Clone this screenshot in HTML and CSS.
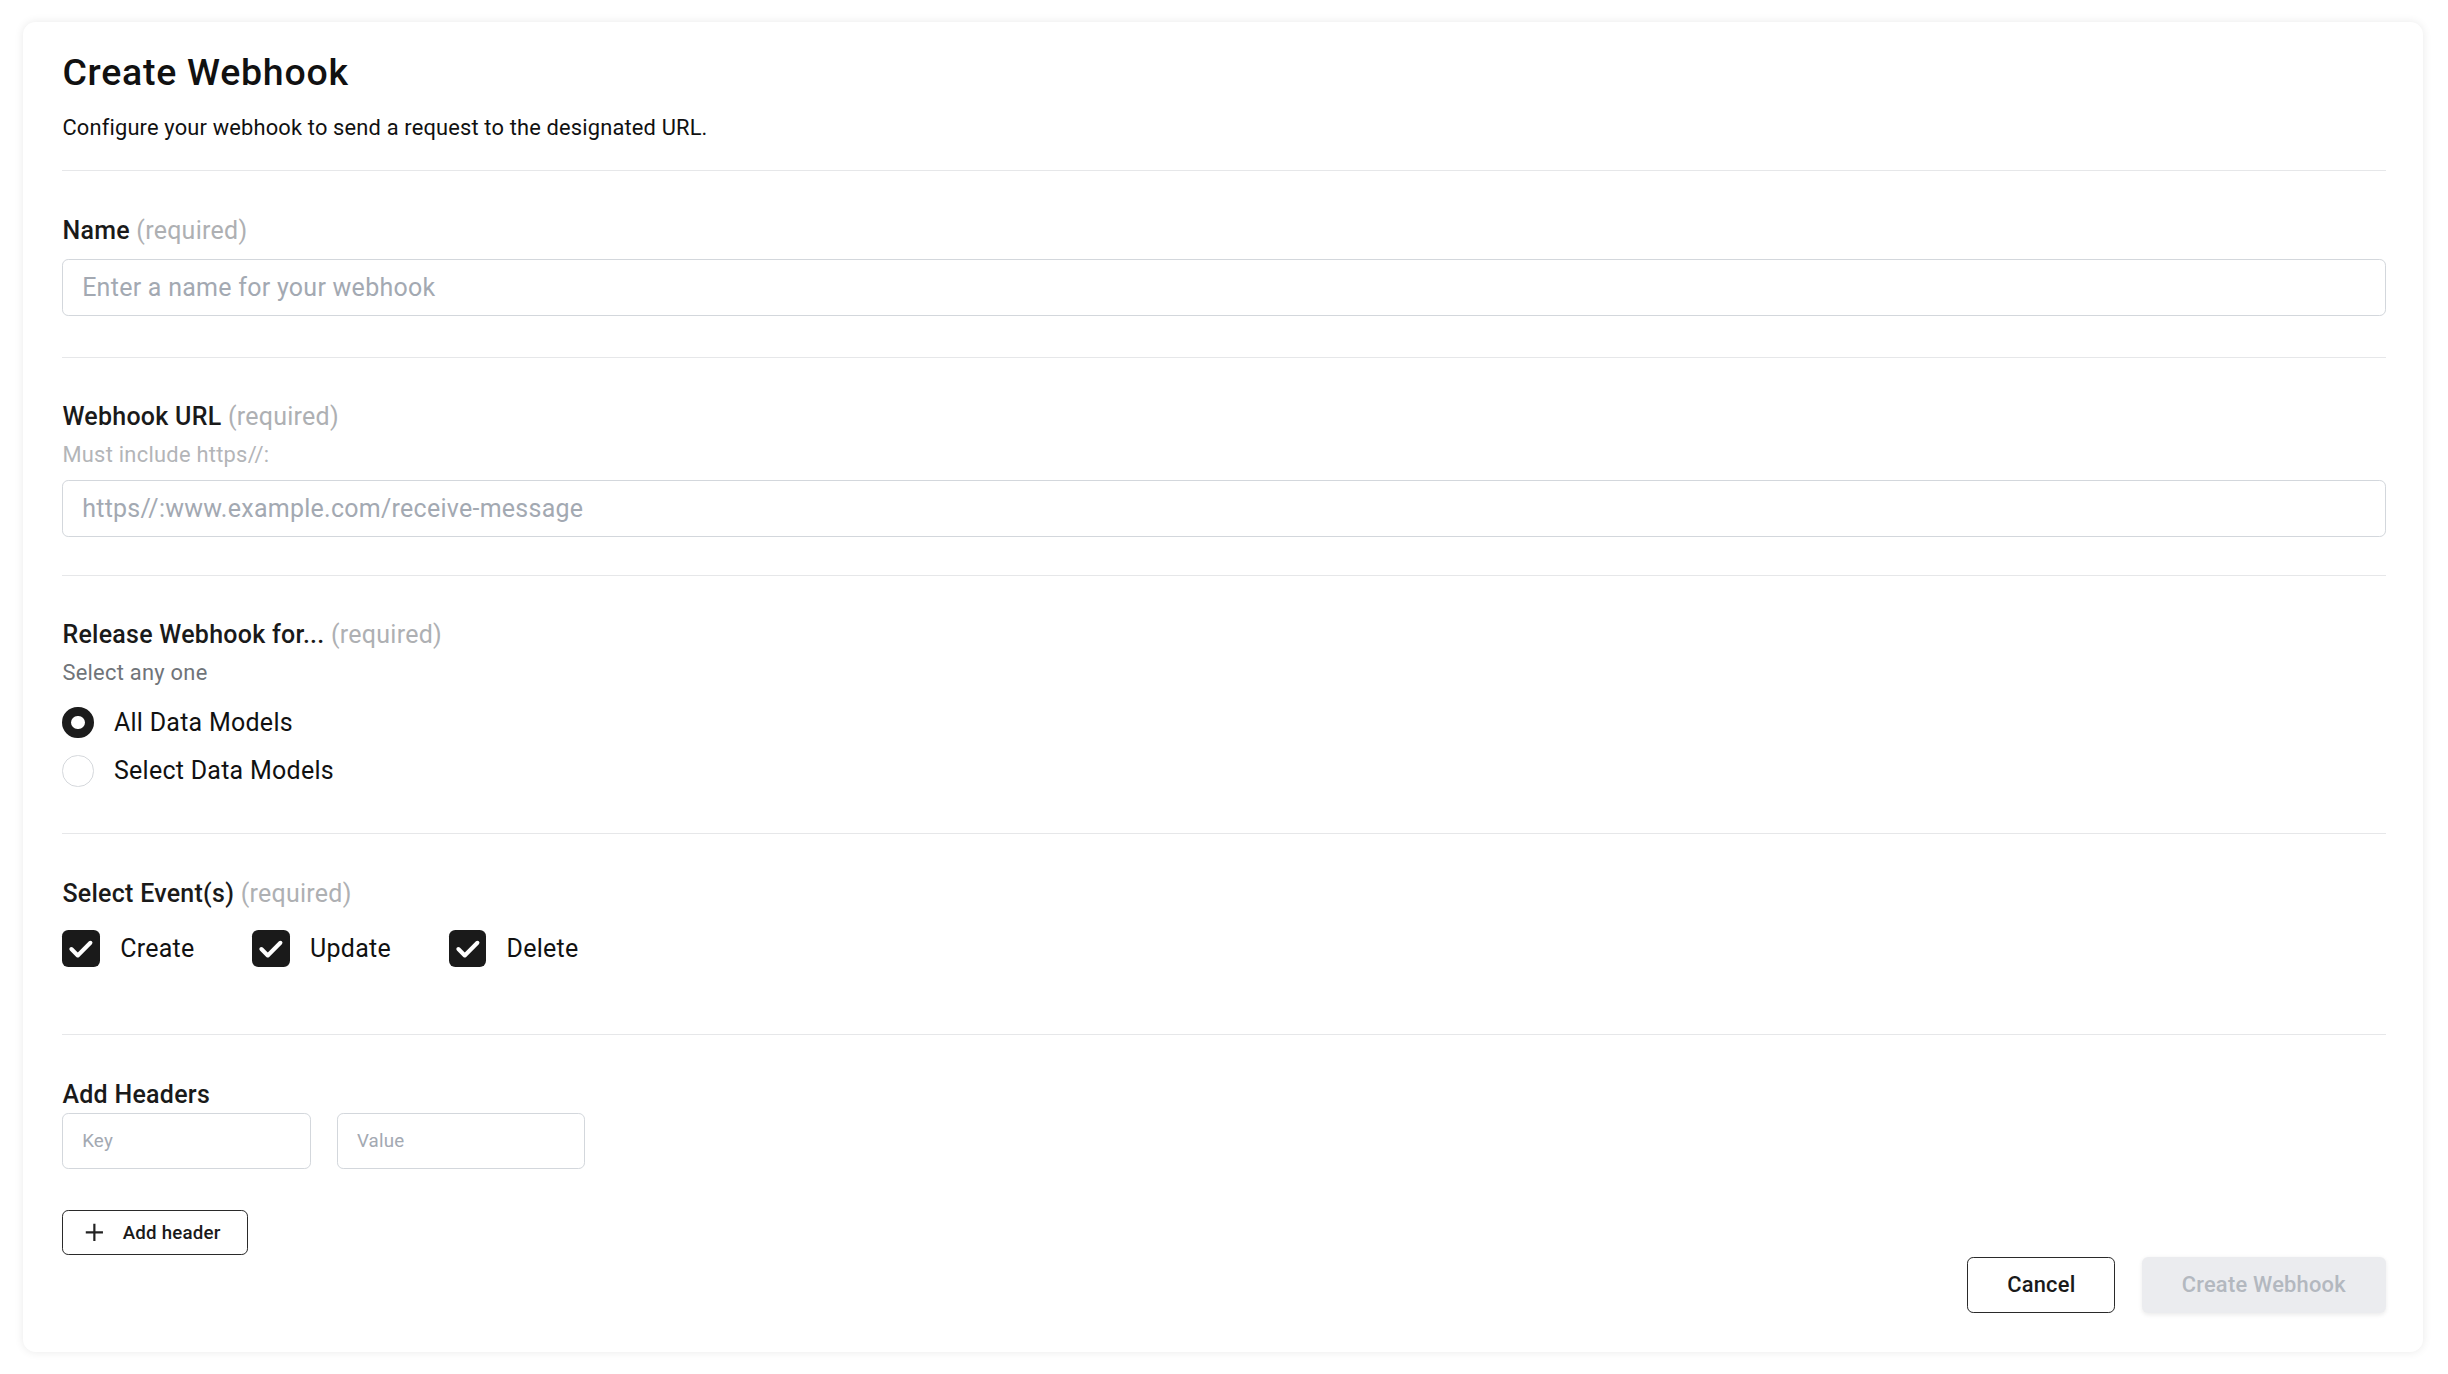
FILE: index.html
```html
<!DOCTYPE html>
<html lang="en">
    <head>
        <meta charset="UTF-8">
        <title>Create Webhook</title>
        <link rel="stylesheet" href="styles.css">
    </head>
    <body>
        <div class="page">
            <form class="card">
                <div class="card-head">
                    <h1 class="title">Create Webhook</h1>
                    <p class="subtitle">Configure your webhook to send a request to the designated URL.</p>
                </div>

                <div class="section name">
                    <label class="label">Name <span class="req">(required)</span></label>
                    <input class="text-input" type="text" placeholder="Enter a name for your webhook">
                </div>

                <div class="section url">
                    <label class="label">Webhook URL <span class="req">(required)</span></label>
                    <p class="help light">Must include https//:</p>
                    <input class="text-input" type="text" placeholder="https//:www.example.com/receive-message">
                </div>

                <div class="section release">
                    <label class="label">Release Webhook for... <span class="req">(required)</span></label>
                    <p class="help">Select any one</p>
                    <div class="radio-group">
                        <div class="radio-row">
                            <span class="radio checked"></span>
                            <span class="option-text">All Data Models</span>
                        </div>
                        <div class="radio-row">
                            <span class="radio"></span>
                            <span class="option-text">Select Data Models</span>
                        </div>
                    </div>
                </div>

                <div class="section events">
                    <label class="label">Select Event(s) <span class="req">(required)</span></label>
                    <div class="check-row">
                        <div class="check-item">
                            <span class="checkbox">
                                <svg width="24" height="24" viewBox="0 0 24 24"><polyline points="6,12.2 10.1,16.3 18.2,8.2" fill="none" stroke="#fff" stroke-width="2.6" stroke-linecap="round" stroke-linejoin="round"/></svg>
                            </span>
                            <span class="option-text">Create</span>
                        </div>
                        <div class="check-item">
                            <span class="checkbox">
                                <svg width="24" height="24" viewBox="0 0 24 24"><polyline points="6,12.2 10.1,16.3 18.2,8.2" fill="none" stroke="#fff" stroke-width="2.6" stroke-linecap="round" stroke-linejoin="round"/></svg>
                            </span>
                            <span class="option-text">Update</span>
                        </div>
                        <div class="check-item">
                            <span class="checkbox">
                                <svg width="24" height="24" viewBox="0 0 24 24"><polyline points="6,12.2 10.1,16.3 18.2,8.2" fill="none" stroke="#fff" stroke-width="2.6" stroke-linecap="round" stroke-linejoin="round"/></svg>
                            </span>
                            <span class="option-text">Delete</span>
                        </div>
                    </div>
                </div>

                <div class="section last">
                    <label class="label">Add Headers</label>
                    <div class="header-row">
                        <input class="small-input" type="text" placeholder="Key">
                        <input class="small-input" type="text" placeholder="Value">
                    </div>
                    <button type="button" class="add-button">
                        <svg width="12" height="12" viewBox="0 0 12 12"><path d="M6 0.5V11.5M0.5 6H11.5" stroke="#222" stroke-width="1.4"/></svg>
                        Add header
                    </button>
                    <div class="actions">
                        <button type="button" class="btn-cancel">Cancel</button>
                        <button type="button" class="btn-create">Create Webhook</button>
                    </div>
                </div>
            </form>
        </div>
    </body>
</html>
```

FILE: styles.css
```css
* {
    box-sizing: border-box;
}
body {
    margin: 0;
    zoom: 1.5612;
    background: #ffffff;
    font-family: Roboto, "Liberation Sans", sans-serif;
    letter-spacing: 0.011em;
    color: #1a1a1a;
}
input,
button {
    font-family: Roboto, "Liberation Sans", sans-serif;
    letter-spacing: 0.011em;
}
.page {
    padding: 14px 16px 14px 15px;
}
.card {
    background: #fff;
    border-radius: 8px;
    box-shadow: 0 0 6px rgba(0, 0, 0, 0.09);
    padding: 17px 24px 25px 25px;
}
.card-head {
    padding-bottom: 17px;
    border-bottom: 1px solid #e6e7e9;
}
.title {
    margin: 0;
    font-size: 24px;
    line-height: 32px;
    font-weight: 500;
    letter-spacing: 0.02em;
    color: #111;
}
.subtitle {
    margin: 9px 0 0;
    font-size: 14px;
    line-height: 20px;
    letter-spacing: 0.008em;
    color: #111;
}
.section {
    padding: 26px 0 25px;
    border-bottom: 1px solid #e6e7e9;
    display: flex;
    flex-direction: column;
    align-items: flex-start;
}
.name {
    padding-bottom: 26px;
}
.label {
    font-size: 16px;
    line-height: 24px;
    font-weight: 500;
    color: #1a1a1a;
    margin-bottom: 6px;
}
.req {
    font-weight: 400;
    color: #aeb0b3;
}
.help {
    margin: -4px 0 6px;
    font-size: 14px;
    line-height: 20px;
    color: #707479;
}
.help.light {
    color: #b3b5b8;
}
.url {
    padding-bottom: 24px;
}
.text-input {
    width: 100%;
    height: 37px;
    border: 1px solid #d3d7dc;
    border-radius: 4px;
    padding: 0 12px;
    font-size: 16px;
    color: #1a1a1a;
    outline: none;
}
.text-input::placeholder,
.small-input::placeholder {
    color: #a3a9b2;
}
.release {
    padding-bottom: 28px;
}
.release .help {
    margin: -4px 0 0;
}
.radio-group {
    margin-top: 10px;
    display: flex;
    flex-direction: column;
    gap: 7px;
}
.radio-row {
    display: flex;
    align-items: center;
    height: 24px;
    gap: 13px;
}
.radio {
    width: 20px;
    height: 20px;
    border-radius: 50%;
    border: 1px solid #d5d8dc;
    background: #fff;
}
.radio.checked {
    border: 6.3px solid #1c1c1c;
}
.option-text {
    font-size: 16px;
    line-height: 24px;
    color: #111;
}
.events {
    padding-bottom: 43px;
}
.events .label {
    margin-bottom: 11px;
}
.check-row {
    display: flex;
    gap: 37px;
}
.check-item {
    display: flex;
    align-items: center;
    gap: 13px;
}
.checkbox {
    width: 24px;
    height: 24px;
    border-radius: 4px;
    background: #1a1a1a;
    display: flex;
}
.last {
    border-bottom: none;
    padding-bottom: 0;
    align-items: stretch;
}
.last .label {
    margin-bottom: 0;
}
.header-row {
    display: flex;
    gap: 17px;
}
.small-input {
    width: 159px;
    height: 36px;
    border: 1px solid #d3d7dc;
    border-radius: 4px;
    padding: 0 12px;
    font-size: 12px;
    outline: none;
}
.add-button {
    align-self: flex-start;
    margin-top: 26px;
    height: 29px;
    width: 119px;
    display: flex;
    align-items: center;
    gap: 12px;
    padding: 0 0 0 14px;
    background: #fff;
    border: 1px solid #2a2a2a;
    border-radius: 4px;
    font-size: 12px;
    font-weight: 500;
    color: #1a1a1a;
}
.actions {
    margin-top: 1px;
    display: flex;
    justify-content: flex-end;
    gap: 17px;
}
.btn-cancel,
.btn-create {
    height: 36px;
    border-radius: 4px;
    font-size: 14px;
    font-weight: 500;
}
.btn-cancel {
    width: 95px;
    background: #fff;
    border: 1px solid #2a2a2a;
    color: #1a1a1a;
}
.btn-create {
    width: 156px;
    background: #ebecef;
    border: none;
    color: #b3b8bf;
    box-shadow: 0 1px 3px rgba(0, 0, 0, 0.08);
}
```
